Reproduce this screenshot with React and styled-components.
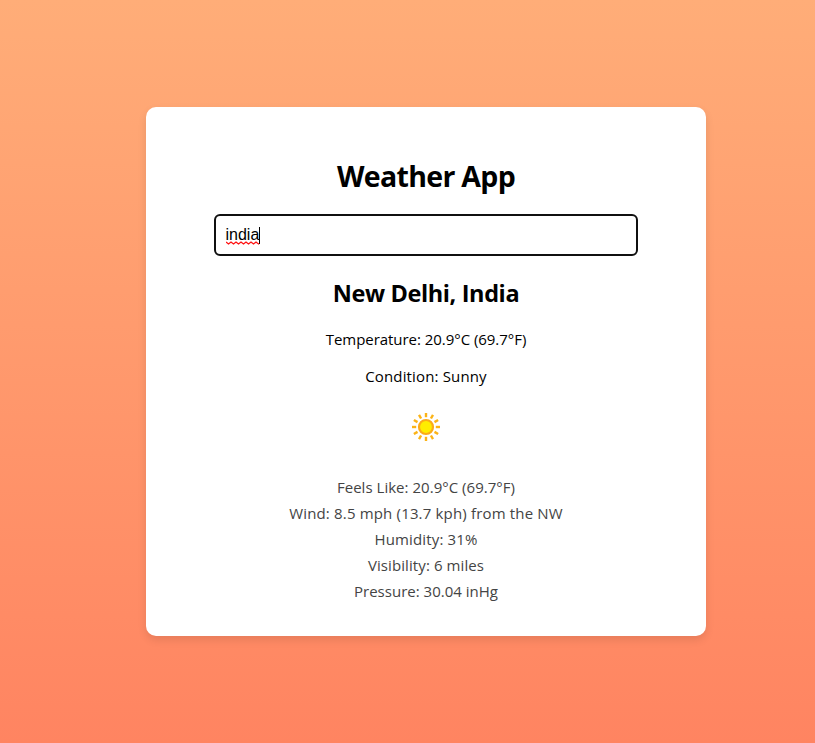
import React from 'react';
import styled, { createGlobalStyle } from 'styled-components';

const GlobalStyle = createGlobalStyle`
  * { box-sizing: border-box; }
  html, body { margin: 0; overflow: hidden; }
`;

const Page = styled.div`
  width: 852px;
  height: 743px;
  display: flex;
  align-items: center;
  justify-content: center;
  background: linear-gradient(to bottom, #ffad78, #ff8461);
  font-family: 'Open Sans', 'Noto Sans', sans-serif;
`;

const Card = styled.main`
  width: 560px;
  height: 529px;
  display: flex;
  flex-direction: column;
  align-items: center;
  padding-top: 49px;
  border-radius: 10px;
  background: #fff;
  box-shadow: 0 4px 8px rgba(0, 0, 0, 0.1);
  color: #000;
  white-space: nowrap;
`;

const Title = styled.h1`
  margin: 0 0 18px;
  font-size: 28.5px;
  line-height: 40px;
  letter-spacing: -0.68px;
`;

const SearchField = styled.div`
  width: 424px;
  height: 42px;
  display: flex;
  align-items: center;
  padding-left: 9.5px;
  border: 2px solid #101010;
  border-radius: 6px;
  font: 16px/20px 'Liberation Sans', Arial, sans-serif;
`;

const Query = styled.span`
  position: relative;
  height: 20px;
`;

const Squiggle = styled.svg`
  position: absolute;
  left: 0;
  top: 16px;
`;

const Caret = styled.span`
  width: 1px;
  height: 17px;
  background: #000;
`;

const City = styled.h2`
  margin: 21px 0 17px;
  font-size: 23.5px;
  line-height: 32px;
  letter-spacing: -0.38px;
`;

const Reading = styled.p`
  margin: 0 0 11px;
  font-size: 15px;
  line-height: 26px;
  letter-spacing: ${({ $tracking }) => $tracking}px;
`;

const SunIcon = styled.svg`
  margin: 12px 0 32px;
`;

const Details = styled.div`
  color: #444;
`;

const Detail = styled(Reading)`
  margin: 0;
  text-align: center;
`;

const details = [
  ['Feels Like: 20.9°C (69.7°F)', 0.03],
  ['Wind: 8.5 mph (13.7 kph) from the NW', 0.17],
  ['Humidity: 31%', 0.15],
  ['Visibility: 6 miles', 0.09],
  ['Pressure: 30.04 inHg', 0.01],
];

const rays = Array.from({ length: 12 }, (_, i) => i * 30);

function Sun() {
  return (
    <SunIcon width="30" height="30" viewBox="-15 -15 30 30" aria-label="Sunny">
      <circle r="7" fill="#ffed00" stroke="#fbab18" strokeWidth="2.2" />
      {rays.map((angle) => (
        <path
          key={angle}
          d="M0-9.8V-14"
          transform={`rotate(${angle})`}
          stroke="#fbb316"
          strokeWidth="2.4"
        />
      ))}
    </SunIcon>
  );
}

export default function App() {
  return (
    <>
      <GlobalStyle />
      <Page>
        <Card>
          <Title>Weather App</Title>
          <SearchField>
            <Query>
              india
              <Squiggle width="34" height="4" viewBox="0 0 34 4">
                <path
                  d="M0 1L2.5 3L5 1L7.5 3L10 1L12.5 3L15 1L17.5 3L20 1L22.5 3L25 1L27.5 3L30 1L32.5 3L33 2.5"
                  fill="none"
                  stroke="#f11"
                  strokeWidth="1.3"
                />
              </Squiggle>
            </Query>
            <Caret />
          </SearchField>
          <City>New Delhi, India</City>
          <Reading $tracking={-0.04}>Temperature: 20.9°C (69.7°F)</Reading>
          <Reading $tracking={0.15}>Condition: Sunny</Reading>
          <Sun />
          <Details>
            {details.map(([text, tracking]) => (
              <Detail key={text} $tracking={tracking}>{text}</Detail>
            ))}
          </Details>
        </Card>
      </Page>
    </>
  );
}
